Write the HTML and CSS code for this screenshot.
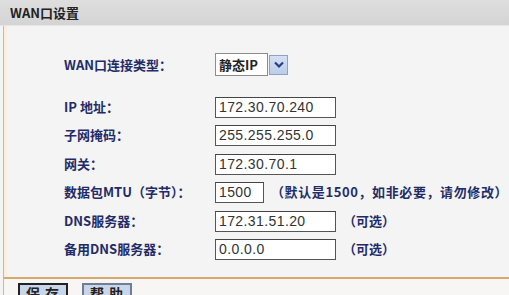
FILE: index.html
```html
<!DOCTYPE html>
<html lang="zh">
<head>
<meta charset="utf-8">
<title>WAN口设置</title>
<link rel="stylesheet" href="styles.css">
</head>
<body>
<div class="panel">
  <div class="title">WAN口设置</div>
  <div class="body">
    <div class="type-row">
      <span class="label">WAN口连接类型：</span>
      <div class="select">
        <span class="select-text">静态IP</span>
        <span class="select-btn">
          <svg width="12" height="8" viewBox="0 0 12 8"><path d="M2 1.5 L6 5.5 L10 1.5" fill="none" stroke="#24407e" stroke-width="2.2"/></svg>
        </span>
      </div>
    </div>
    <div class="rows">
      <div class="row"><span class="label">IP 地址：</span><span class="input">172.30.70.240</span></div>
      <div class="row"><span class="label">子网掩码：</span><span class="input">255.255.255.0</span></div>
      <div class="row"><span class="label">网关：</span><span class="input">172.30.70.1</span></div>
      <div class="row"><span class="label">数据包MTU（字节）：</span><span class="input short">1500</span><span class="hint wide">（默认是1500，如非必要，请勿修改）</span></div>
      <div class="row"><span class="label">DNS服务器：</span><span class="input">172.31.51.20</span><span class="hint">（可选）</span></div>
      <div class="row"><span class="label">备用DNS服务器：</span><span class="input">0.0.0.0</span><span class="hint">（可选）</span></div>
    </div>
  </div>
  <div class="actions">
    <span class="btn primary">保 存</span>
    <span class="btn">帮 助</span>
  </div>
</div>
</body>
</html>
```
FILE: styles.css
```css
html, body {
  margin: 0;
  padding: 0;
  background: #f4f4f4;
}
body {
  width: 509px;
  height: 295px;
  overflow: hidden;
  font-family: "Noto Sans CJK SC", "Liberation Sans", sans-serif;
}
.panel {
  width: 509px;
}
.title {
  height: 26px;
  box-sizing: border-box;
  background: linear-gradient(#dedede, #d4d4d4);
  border-bottom: 1px solid #e6e6e6;
  padding-left: 10px;
  font-size: 13px;
  font-weight: bold;
  line-height: 25px;
  color: #222;
}
.body {
  margin-left: 3px;
  height: 251px;
  box-sizing: border-box;
  border-left: 1px solid #e2b47c;
  box-shadow: inset 3px 0 0 #fbeee0;
  background: #f4f4f4;
  padding-left: 60px;
  padding-top: 27px;
}
.label {
  width: 151px;
  flex: none;
  font-size: 13px;
  font-weight: bold;
  color: #1f2c68;
  white-space: nowrap;
}
.type-row {
  display: flex;
  align-items: center;
  height: 23px;
}
.select {
  display: flex;
  align-items: center;
  height: 23px;
}
.select-text {
  width: 48px;
  height: 21px;
  border: 1px solid #8c8c8c;
  background: #fff;
  padding-left: 3px;
  font-size: 13px;
  font-weight: bold;
  line-height: 21px;
  color: #222;
}
.select-btn {
  margin-left: 1px;
  width: 17px;
  height: 18px;
  border: 1px solid #8ea2c4;
  background: linear-gradient(#d4e0f4, #bccde9);
  display: flex;
  align-items: center;
  justify-content: center;
}
.rows {
  margin-top: 21px;
  display: grid;
  grid-auto-rows: 28.4px;
}
.row {
  display: flex;
  align-items: flex-start;
}
.row .label {
  line-height: 19px;
}
.input {
  width: 116px;
  height: 19px;
  border: 1px solid #555;
  border-top-color: #444;
  background: #fff;
  padding-left: 3px;
  font-family: "Liberation Sans", "DejaVu Sans", sans-serif;
  font-size: 14px;
  letter-spacing: 0.4px;
  line-height: 19px;
  color: #333;
  flex: none;
}
.input.short {
  width: 44px;
}
.hint {
  margin-left: 7px;
  font-size: 13px;
  font-weight: bold;
  color: #1f2c68;
  line-height: 19px;
  white-space: nowrap;
}
.hint.wide {
  margin-left: 7px;
  letter-spacing: 0.6px;
}
.actions {
  margin-left: 3px;
  border-left: 1px solid #e2b47c;
  border-top: 2px solid #d9a86c;
  background: #f8f6f4;
  height: 20px;
  padding: 4px 0 0 14px;
  display: flex;
  gap: 14px;
}
.btn {
  width: 46px;
  height: 18px;
  border: 2px solid #6e7e96;
  background: #c9d5e8;
  font-size: 14px;
  font-weight: bold;
  line-height: 16px;
  text-align: center;
  color: #222;
  letter-spacing: 1px;
}
.btn.primary {
  border-color: #222;
}
```
